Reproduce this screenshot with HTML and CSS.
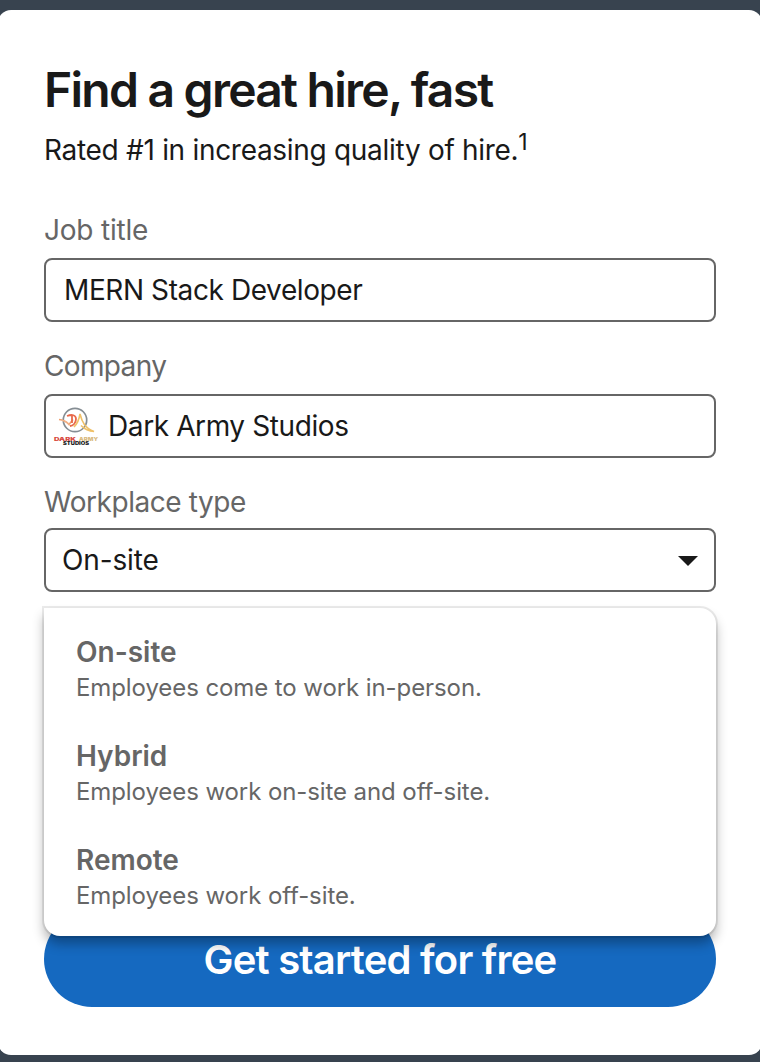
FILE: index.html
```html
<!DOCTYPE html>
<html lang="en">
<head>
<meta charset="utf-8">
<title>Find a great hire, fast</title>
<link rel="stylesheet" href="styles.css">
</head>
<body>
<main class="card">
  <h1 class="title">Find a great hire, fast</h1>
  <p class="subtitle">Rated #1 in increasing quality of hire.<sup>1</sup></p>
  <form class="form">
    <div class="field">
      <span class="label label-job">Job title</span>
      <div class="input"><span class="value">MERN Stack Developer</span></div>
    </div>
    <div class="field">
      <span class="label label-company">Company</span>
      <div class="input input-company">
        <svg class="logo" width="48" height="48" viewBox="0 0 48 48">
          <circle cx="23" cy="18" r="11.700" fill="none" stroke="#858d93" stroke-width="1.700"/>
          <path d="M7 17.500c5 .5 7 1.500 10 5l4-5" fill="none" stroke="#f0a070" stroke-width="1.600"/>
          <path d="M10 18.500c4 0 6 2 8 5" fill="none" stroke="#f3b58a" stroke-width="1.200"/>
          <path d="M15 14c5-2 9-1 9 3s-3 7-6 7M20 14v7" fill="none" stroke="#e8694b" stroke-width="1.800"/>
          <path d="M22 25c3-3 5-7 6-13 2 8 5 14 14 17.500-7-.5-10-3-13-6" fill="none" stroke="#efc068" stroke-width="1.600"/>
          <text x="2" y="39" class="logo-name" fill="#d84b43" textLength="22" lengthAdjust="spacingAndGlyphs">DARK</text>
          <text x="27" y="39" class="logo-name" fill="#d9ba80" textLength="19" lengthAdjust="spacingAndGlyphs">ARMY</text>
          <text x="11" y="43.200" class="logo-name logo-sub" fill="#222" textLength="26" lengthAdjust="spacingAndGlyphs">STUDIOS</text>
        </svg>
        <span class="value">Dark Army Studios</span>
      </div>
    </div>
    <div class="field field-select">
      <span class="label label-type">Workplace type</span>
      <div class="input input-select">
        <span class="value-type">On-site</span>
        <svg class="caret" width="20" height="10" viewBox="0 0 20 10"><path d="M0 0h20L10 10z" fill="#191919"/></svg>
      </div>
      <ul class="menu">
        <li class="option"><strong class="name">On-site</strong><span class="desc">Employees come to work in-person.</span></li>
        <li class="option"><strong class="name">Hybrid</strong><span class="desc">Employees work on-site and off-site.</span></li>
        <li class="option"><strong class="name">Remote</strong><span class="desc">Employees work off-site.</span></li>
      </ul>
    </div>
    <button class="submit" type="button"><span>Get started for free</span></button>
  </form>
</main>
</body>
</html>
```
FILE: styles.css
```css
* { box-sizing: border-box; }
body {
  margin: 0;
  height: 1062px;
  padding-top: 10px;
  overflow: hidden;
  background: #38434f;
  font-family: Inter, sans-serif;
  color: #191919;
}
.card {
  height: 1045px;
  margin: 0 -2px;
  padding: 50px 46px 0;
  border-radius: 13px;
  background: #fff;
}
.title {
  margin: 0;
  font-size: 48px;
  line-height: 60px;
  font-weight: 600;
  letter-spacing: -1.75px;
  white-space: nowrap;
}
.subtitle {
  margin: 10px 0 0;
  font-size: 28px;
  line-height: 40px;
  letter-spacing: -0.3px;
  white-space: nowrap;
}
.subtitle sup {
  font-size: 23px;
  line-height: 0;
  vertical-align: 10px;
}
.form { padding-top: 42px; }
.field { position: relative; height: 136px; }
.label {
  display: block;
  height: 46px;
  color: #666;
  font-size: 28px;
  line-height: 36px;
  white-space: nowrap;
}
.label-job { letter-spacing: -0.2px; }
.label-company { letter-spacing: -0.65px; }
.label-type { letter-spacing: -0.45px; }
.input {
  display: flex;
  align-items: center;
  height: 64px;
  padding: 0 18px;
  border: 2px solid #666;
  border-radius: 8px;
  font-size: 28px;
  white-space: nowrap;
}
.value { letter-spacing: -0.4px; }
.value-type { letter-spacing: -0.15px; }
.input-company { padding-left: 6px; gap: 8px; }
.field-select .label { height: 44px; }
.input-select { justify-content: space-between; padding: 0 16px; }
.caret { margin-top: 2px; }
.logo { flex: none; }
.logo-name { font: 900 5px Inter, sans-serif; }
.logo-sub { font-size: 4.5px; }
.menu {
  position: absolute;
  z-index: 1;
  top: 124px;
  left: 0;
  width: 672px;
  height: 328px;
  margin: 0;
  padding: 26px 32px;
  list-style: none;
  background: #fff;
  border-radius: 0 16px 16px 16px;
  box-shadow: 0 0 0 2px rgba(0,0,0,.08), 0 8px 12px rgba(0,0,0,.3);
}
.option { height: 104px; color: #666; white-space: nowrap; }
.name { display: block; font-size: 28px; line-height: 36px; font-weight: 600; }
.desc { display: block; font-size: 24px; line-height: 36px; letter-spacing: -0.09px; }
.submit {
  display: block;
  width: 672px;
  height: 96px;
  margin-top: 291px;
  padding: 2px 0 0;
  border: 0;
  border-radius: 48px;
  background: #1569c0;
  color: #fff;
  font: 600 40px/48px Inter, sans-serif;
  letter-spacing: -0.8px;
}
```
